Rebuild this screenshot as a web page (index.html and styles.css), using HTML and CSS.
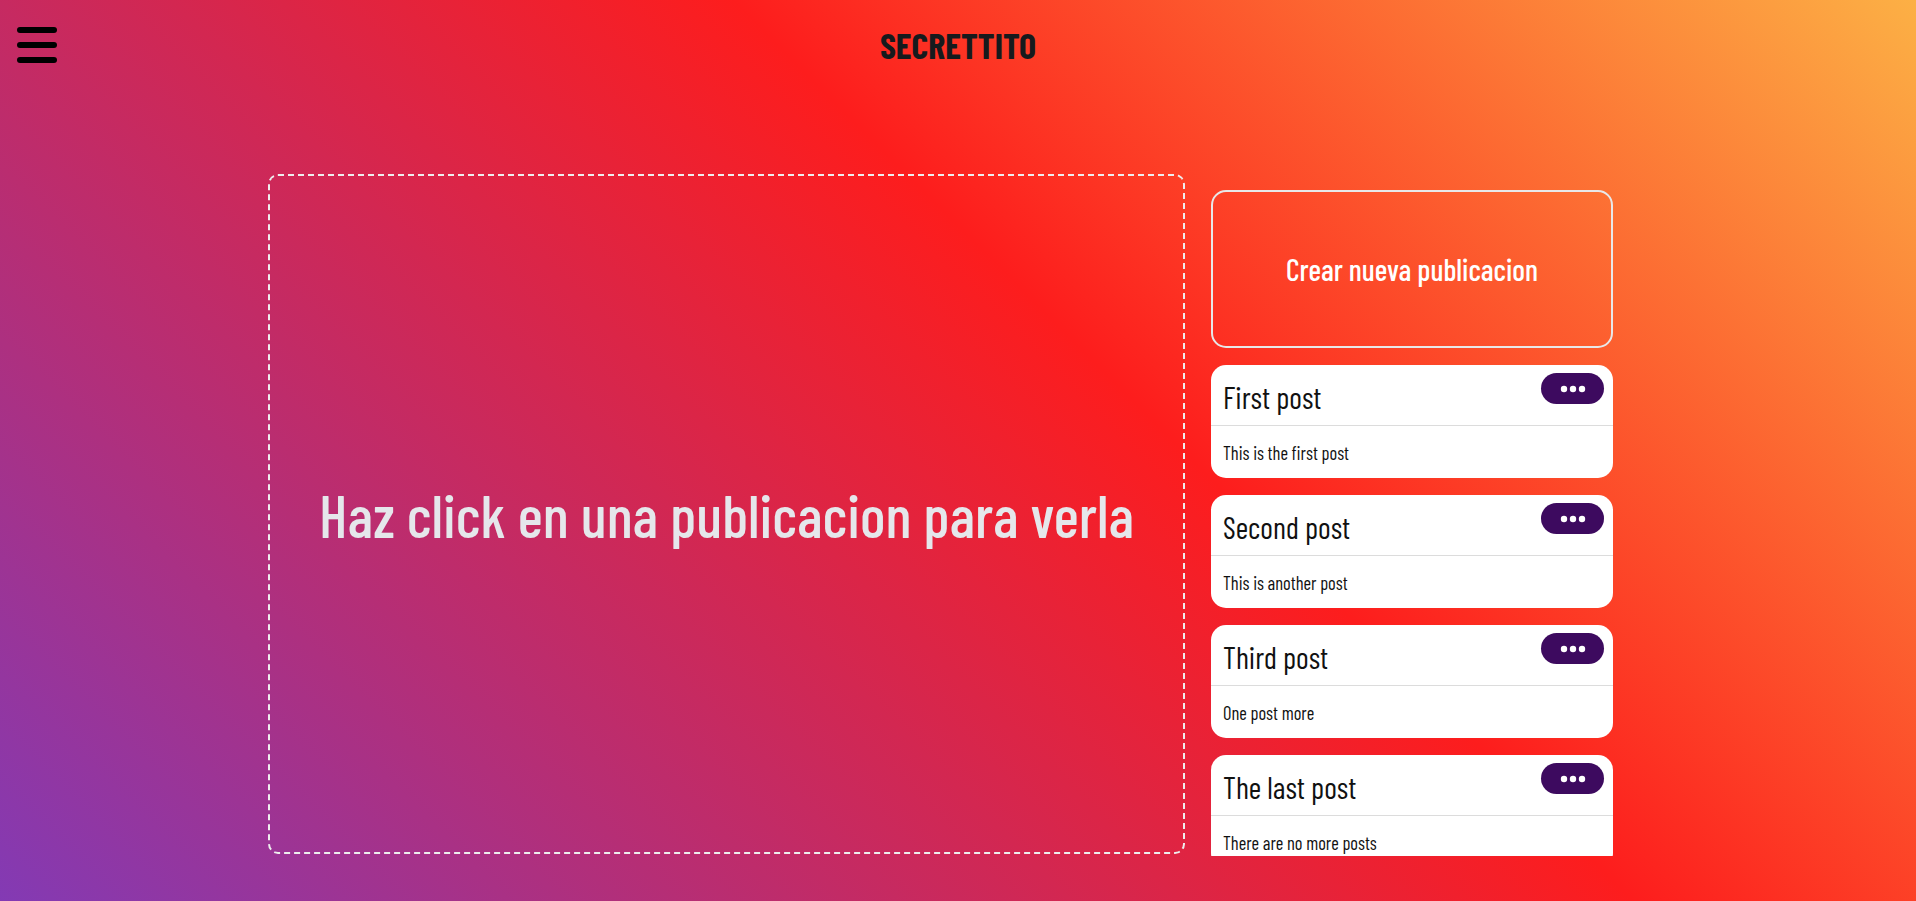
FILE: index.html
```html
<!DOCTYPE html>
<html lang="es">
<head>
<meta charset="utf-8">
<title>Secrettito</title>
<link rel="stylesheet" href="styles.css">
</head>
<body>
<header class="topbar">
  <button class="menu-btn" aria-label="Menu">
    <span class="bar"></span><span class="bar"></span><span class="bar"></span>
  </button>
  <h1 class="brand">SECRETTITO</h1>
</header>
<main class="main">
  <section class="viewer">
    <p class="viewer-msg">Haz click en una publicacion para verla</p>
  </section>
  <aside class="sidebar">
    <button class="create-btn">Crear nueva publicacion</button>
    <article class="post">
      <div class="post-head">
        <h2 class="post-title">First post</h2>
        <button class="more-btn" aria-label="Opciones"><svg width="26" height="8" viewBox="0 0 26 8"><circle cx="4" cy="4" r="3.2" fill="#fff"/><circle cx="13" cy="4" r="3.2" fill="#fff"/><circle cx="22" cy="4" r="3.2" fill="#fff"/></svg></button>
      </div>
      <p class="post-body">This is the first post</p>
    </article>
    <article class="post">
      <div class="post-head">
        <h2 class="post-title">Second post</h2>
        <button class="more-btn" aria-label="Opciones"><svg width="26" height="8" viewBox="0 0 26 8"><circle cx="4" cy="4" r="3.2" fill="#fff"/><circle cx="13" cy="4" r="3.2" fill="#fff"/><circle cx="22" cy="4" r="3.2" fill="#fff"/></svg></button>
      </div>
      <p class="post-body">This is another post</p>
    </article>
    <article class="post">
      <div class="post-head">
        <h2 class="post-title">Third post</h2>
        <button class="more-btn" aria-label="Opciones"><svg width="26" height="8" viewBox="0 0 26 8"><circle cx="4" cy="4" r="3.2" fill="#fff"/><circle cx="13" cy="4" r="3.2" fill="#fff"/><circle cx="22" cy="4" r="3.2" fill="#fff"/></svg></button>
      </div>
      <p class="post-body">One post more</p>
    </article>
    <article class="post">
      <div class="post-head">
        <h2 class="post-title">The last post</h2>
        <button class="more-btn" aria-label="Opciones"><svg width="26" height="8" viewBox="0 0 26 8"><circle cx="4" cy="4" r="3.2" fill="#fff"/><circle cx="13" cy="4" r="3.2" fill="#fff"/><circle cx="22" cy="4" r="3.2" fill="#fff"/></svg></button>
      </div>
      <p class="post-body">There are no more posts</p>
    </article>
  </aside>
</main>
</body>
</html>
```

FILE: styles.css
```css
* { box-sizing: border-box; }
html, body { margin: 0; padding: 0; }
body {
  height: 901px;
  overflow: hidden;
  background: linear-gradient(45deg, #833ab4 0%, #fd1d1d 58%, #fcb045 100%);
  font-family: "Barlow Condensed", "Roboto Condensed", sans-serif;
  color: #111;
}
.topbar {
  position: relative;
  height: 90px;
  display: flex;
  align-items: center;
  justify-content: center;
}
.menu-btn {
  position: absolute;
  left: 17px;
  top: 27px;
  width: 40px;
  height: 36px;
  padding: 0;
  border: 0;
  background: transparent;
  display: flex;
  flex-direction: column;
  justify-content: space-between;
}
.bar {
  display: block;
  width: 40px;
  height: 6px;
  border-radius: 3px;
  background: #000;
}
.brand {
  margin: 0;
  font-size: 36px;
  font-weight: 700;
  line-height: 1;
  color: #161a1d;
}
.main {
  display: flex;
  justify-content: center;
  gap: 26px;
  padding-top: 84px;
  padding-right: 35px;
}
.viewer {
  width: 917px;
  height: 680px;
  border: 2px dashed #eeeeee;
  border-radius: 10px;
  display: flex;
  align-items: center;
  justify-content: center;
}
.viewer-msg {
  margin: 0;
  font-size: 60px;
  font-weight: 500;
  color: #e5e7eb;
}
.sidebar {
  width: 402px;
  height: 682px;
  overflow: hidden;
  padding-top: 16px;
  display: flex;
  flex-direction: column;
  gap: 17px;
}
.create-btn {
  flex: none;
  height: 158px;
  border: 2px solid #e8e8e8;
  border-radius: 15px;
  background: transparent;
  color: #fff;
  font-family: inherit;
  font-size: 30px;
  font-weight: 500;
}
.post {
  flex: none;
  height: 113px;
  background: #fff;
  border-radius: 15px;
  display: flex;
  flex-direction: column;
}
.post-head {
  height: 61px;
  border-bottom: 1px solid #dcdcdc;
  display: flex;
  justify-content: space-between;
  align-items: flex-start;
  padding: 8px 9px 0 12px;
}
.post-title {
  margin: 9px 0 0;
  font-size: 30.5px;
  font-weight: 400;
  line-height: 1;
  color: #111;
}
.more-btn {
  width: 63px;
  height: 31px;
  border: 0;
  border-radius: 16px;
  background: #3d0a5f;
  display: flex;
  align-items: center;
  justify-content: center;
  padding: 0;
}
.post-body {
  margin: 0;
  padding: 18px 12px 0;
  font-size: 18.5px;
  font-weight: 400;
  line-height: 1;
  color: #111;
}
```
